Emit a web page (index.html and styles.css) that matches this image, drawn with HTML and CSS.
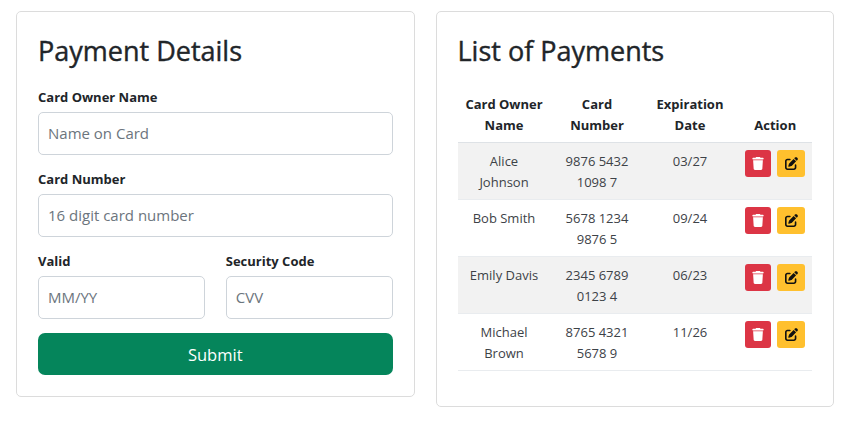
FILE: index.html
```html
<!DOCTYPE html>
<html lang="en">
<head>
  <meta charset="UTF-8">
  <title>Payments</title>
  <link rel="stylesheet" href="styles.css">
</head>
<body>
  <svg class="icon-defs" xmlns="http://www.w3.org/2000/svg">
    <symbol id="icon-trash" viewBox="0 0 448 512">
      <path d="M135.2 17.7L128 32H32C14.3 32 0 46.3 0 64S14.3 96 32 96H416c17.7 0 32-14.3 32-32s-14.3-32-32-32H320l-7.2-14.3C307.4 6.8 296.3 0 284.2 0H163.8c-12.1 0-23.2 6.8-28.6 17.7zM416 128H32L53.2 467c1.6 25.3 22.6 45 47.9 45H346.9c25.3 0 46.3-19.7 47.9-45L416 128z"/>
    </symbol>
    <symbol id="icon-edit" viewBox="0 0 512 512">
      <path d="M471.6 21.7c-21.9-21.9-57.3-21.9-79.2 0L362.3 51.7l97.9 97.9 30.1-30.1c21.9-21.9 21.9-57.3 0-79.2L471.6 21.7zm-299.2 220c-6.1 6.1-10.8 13.6-13.5 21.9l-29.6 88.8c-2.9 8.6-.6 18.1 5.8 24.6s15.9 8.7 24.6 5.8l88.8-29.6c8.2-2.7 15.7-7.4 21.9-13.5L437.7 172.3 339.7 74.3 172.4 241.7zM96 64C43 64 0 107 0 160V416c0 53 43 96 96 96H352c53 0 96-43 96-96V320c0-17.7-14.3-32-32-32s-32 14.3-32 32v96c0 17.7-14.3 32-32 32H96c-17.7 0-32-14.3-32-32V160c0-17.7 14.3-32 32-32h96c17.7 0 32-14.3 32-32s-14.3-32-32-32H96z"/>
    </symbol>
  </svg>

  <main class="layout">
    <section class="card">
      <h2>Payment Details</h2>
      <form>
        <div class="field">
          <label for="owner">Card Owner Name</label>
          <input id="owner" type="text" placeholder="Name on Card">
        </div>
        <div class="field">
          <label for="number">Card Number</label>
          <input id="number" type="text" placeholder="16 digit card number">
        </div>
        <div class="field-row">
          <div class="field">
            <label for="valid">Valid</label>
            <input id="valid" type="text" placeholder="MM/YY">
          </div>
          <div class="field">
            <label for="cvv">Security Code</label>
            <input id="cvv" type="text" placeholder="CVV">
          </div>
        </div>
        <button type="submit" class="btn-submit">Submit</button>
      </form>
    </section>

    <section class="card">
      <h2>List of Payments</h2>
      <table class="payments">
        <thead>
          <tr>
            <th class="col-data">Card Owner Name</th>
            <th class="col-data">Card Number</th>
            <th class="col-data">Expiration Date</th>
            <th class="col-action">Action</th>
          </tr>
        </thead>
        <tbody>
          <tr>
            <td>Alice Johnson</td>
            <td>9876 5432 1098 7</td>
            <td>03/27</td>
            <td class="col-action">
              <div class="actions">
                <button class="btn-icon btn-delete"><svg class="icon-trash"><use href="#icon-trash"/></svg></button>
                <button class="btn-icon btn-edit"><svg class="icon-edit"><use href="#icon-edit"/></svg></button>
              </div>
            </td>
          </tr>
          <tr>
            <td>Bob Smith</td>
            <td>5678 1234 9876 5</td>
            <td>09/24</td>
            <td class="col-action">
              <div class="actions">
                <button class="btn-icon btn-delete"><svg class="icon-trash"><use href="#icon-trash"/></svg></button>
                <button class="btn-icon btn-edit"><svg class="icon-edit"><use href="#icon-edit"/></svg></button>
              </div>
            </td>
          </tr>
          <tr>
            <td>Emily Davis</td>
            <td>2345 6789 0123 4</td>
            <td>06/23</td>
            <td class="col-action">
              <div class="actions">
                <button class="btn-icon btn-delete"><svg class="icon-trash"><use href="#icon-trash"/></svg></button>
                <button class="btn-icon btn-edit"><svg class="icon-edit"><use href="#icon-edit"/></svg></button>
              </div>
            </td>
          </tr>
          <tr>
            <td>Michael Brown</td>
            <td>8765 4321 5678 9</td>
            <td>11/26</td>
            <td class="col-action">
              <div class="actions">
                <button class="btn-icon btn-delete"><svg class="icon-trash"><use href="#icon-trash"/></svg></button>
                <button class="btn-icon btn-edit"><svg class="icon-edit"><use href="#icon-edit"/></svg></button>
              </div>
            </td>
          </tr>
        </tbody>
      </table>
    </section>
  </main>
</body>
</html>
```
FILE: styles.css
```css
* {
  box-sizing: border-box;
}
body {
  margin: 0;
  background: #fff;
  color: #212529;
  font-family: "Open Sans", "Noto Sans", sans-serif;
  font-size: 14px;
  line-height: 21px;
}
.icon-defs {
  display: none;
}
.layout {
  display: flex;
  align-items: flex-start;
  gap: 21px;
  padding: 11px 16px 0;
}
.card {
  flex: 1;
  padding: 21px;
  background: #fff;
  border: 1px solid #dcdcdc;
  border-radius: 5px;
}
h2 {
  margin: 0 0 19px;
  padding-top: 1px;
  font-size: 27px;
  font-weight: 400;
  line-height: 34px;
  -webkit-text-stroke: 0.4px #212529;
}
.field {
  flex: 1;
  margin-bottom: 14px;
}
.field-row {
  display: flex;
  gap: 21px;
}
label {
  display: block;
  margin-bottom: 4px;
  font-size: 13px;
  font-weight: 700;
}
input {
  display: block;
  width: 100%;
  height: 43px;
  padding: 0 9px 2px;
  border: 1px solid #ced4da;
  border-radius: 5px;
  font: inherit;
  font-size: 15px;
}
input::placeholder {
  color: #6c757d;
}
.btn-submit {
  display: block;
  width: 100%;
  height: 42px;
  border: 0;
  border-radius: 7px;
  background: #05855b;
  color: #fff;
  font: inherit;
  font-size: 16.5px;
}
.payments {
  width: 100%;
  margin-bottom: 14px;
  border-collapse: collapse;
  table-layout: fixed;
  text-align: center;
  font-size: 13px;
}
.col-data {
  width: 93px;
}
th {
  padding: 7px 7px 6px;
  vertical-align: bottom;
  font-weight: 700;
}
td {
  padding: 8px 7px 6px;
  vertical-align: top;
  color: #3d4247;
  border-bottom: 1px solid #e9ecef;
}
thead th {
  border-bottom: 1px solid #dee2e6;
}
tbody tr:nth-child(odd) {
  background: #f2f2f2;
}
.col-action {
  padding-left: 8px;
  padding-right: 6px;
}
.actions {
  display: flex;
  justify-content: center;
  gap: 6px;
  margin-top: -1px;
}
.btn-icon {
  display: flex;
  align-items: center;
  justify-content: center;
  height: 27px;
  padding: 0;
  border: 0;
  border-radius: 3px;
}
.btn-icon svg {
  fill: currentColor;
}
.btn-delete {
  width: 26px;
  background: #dc3545;
  color: #fff;
}
.btn-edit {
  width: 28px;
  background: #ffc02e;
  color: #111;
}
.icon-trash {
  width: 12px;
  height: 13px;
}
.icon-edit {
  width: 13px;
  height: 13px;
}
```
